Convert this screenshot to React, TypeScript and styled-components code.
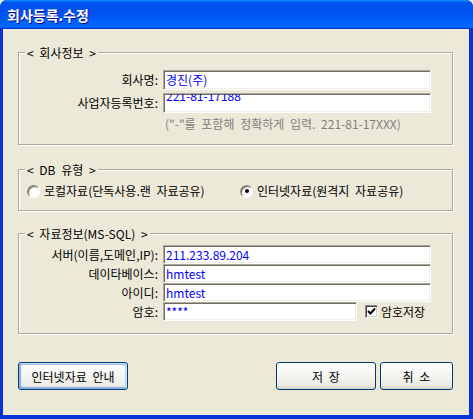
import React from "react";
import styled, { createGlobalStyle, css } from "styled-components";

const GlobalStyle = createGlobalStyle`
  html, body {
    margin: 0;
    padding: 0;
    background: #ece9d8;
    overflow: hidden;
  }
  body {
    font-family: "Noto Sans CJK KR", "Noto Sans", sans-serif;
    font-size: 12px;
    word-spacing: 3px;
    color: #000;
  }
`;

const Window = styled.div`
  width: 473px;
  height: 419px;
  display: flex;
  flex-direction: column;
  background: #0831d9;
  border-radius: 7px 7px 0 0;
  overflow: hidden;
`;

const TitleBar = styled.div`
  height: 29px;
  flex: none;
  display: flex;
  align-items: center;
  padding-left: 7px;
  background: linear-gradient(
    180deg,
    #0997ff,
    #0053ee 8%,
    #0050ee 40%,
    #06f 88%,
    #06f 93%,
    #005bff 95%,
    #003dd7 96%,
    #003dd7
  );
  color: #fff;
  font-size: 14px;
  font-weight: bold;
  text-shadow: 1px 1px #0f1089;
`;

const Client = styled.div`
  flex: 1;
  display: flex;
  flex-direction: column;
  background: #ece9d8;
  border-style: solid;
  border-width: 0 4px 4px 3px;
  border-color: #0831d9;
`;

const Group = styled.fieldset<{ $top: number }>`
  margin: ${(p) => p.$top}px 16px 0 15px;
  padding: 0;
  min-width: 0;
  border: 1px solid #aca899;
  box-shadow: inset 1px 1px 0 #fff, 1px 1px 0 #fff;
`;

const Legend = styled.legend`
  margin-left: 6px;
  padding: 0 2px;
  height: 15px;
  line-height: 15px;
  background: #ece9d8;
  white-space: pre;
`;

const Rows = styled.div<{ $pt: number; $pb: number; $gap: number }>`
  display: flex;
  flex-direction: column;
  gap: ${(p) => p.$gap}px;
  padding: ${(p) => p.$pt}px 0 ${(p) => p.$pb}px 0;
`;

const Row = styled.div<{ $h: number }>`
  display: grid;
  grid-template-columns: 139px auto;
  column-gap: 5px;
  align-items: center;
  height: ${(p) => p.$h}px;
`;

const Label = styled.div`
  text-align: right;
  white-space: nowrap;
  line-height: 14px;
`;

const FieldLine = styled.div`
  display: flex;
  align-items: center;
  height: 100%;
`;

const Field = styled.div<{ $w: number }>`
  box-sizing: border-box;
  width: ${(p) => p.$w}px;
  height: 100%;
  background: #fff;
  border: 1px solid;
  border-color: #aca899 #fff #fff #aca899;
  box-shadow: inset 1px 1px 0 #716f64, inset -1px -1px 0 #f1efe2;
  padding: 0 3px 0 2px;
  overflow: hidden;
  display: flex;
  align-items: center;
`;

const FieldText = styled.span<{ $shift?: boolean }>`
  color: #0000ff;
  line-height: 14px;
  white-space: nowrap;
  ${(p) =>
    p.$shift &&
    css`
      transform: translateY(-7px);
    `}
`;

const Hint = styled.div`
  grid-column: 2;
  padding-left: 2px;
  color: #808080;
  line-height: 14px;
  white-space: pre;
`;

const RadioRow = styled.div`
  display: flex;
  align-items: center;
  height: 16px;
  padding: 6px 0 11px 8px;
`;

const Option = styled.label<{ $w?: number }>`
  display: flex;
  align-items: center;
  gap: 4px;
  ${(p) => p.$w && `width: ${p.$w}px;`}
  white-space: nowrap;
  line-height: 14px;
`;

const RadioDot = styled.span<{ $on?: boolean }>`
  position: relative;
  box-sizing: border-box;
  width: 13px;
  height: 13px;
  flex: none;
  border-radius: 50%;
  border: 1px solid;
  border-color: #8d8b84 #fff #fff #8d8b84;
  background: radial-gradient(circle at 60% 65%, #fff 35%, #e3e1d8 90%);
  box-shadow: inset 1px 1px 0 #6b6a66;
  &::after {
    content: "";
    display: ${(p) => (p.$on ? "block" : "none")};
    position: absolute;
    left: 3.5px;
    top: 3.5px;
    width: 4px;
    height: 4px;
    border-radius: 50%;
    background: #000;
  }
`;

const CheckBox = styled.span`
  box-sizing: border-box;
  width: 13px;
  height: 13px;
  flex: none;
  display: flex;
  align-items: center;
  justify-content: center;
  background: #fff;
  border: 1px solid;
  border-color: #8d8b84 #fff #fff #8d8b84;
  box-shadow: inset 1px 1px 0 #404040, inset -1px -1px 0 #d4d0c8;
`;

const CheckLabel = styled.label`
  display: flex;
  align-items: center;
  gap: 3px;
  margin-left: 8px;
  white-space: nowrap;
  line-height: 14px;
`;

const ButtonBar = styled.div`
  display: flex;
  align-items: center;
  gap: 4px;
  margin: 28px 16px 0 15px;
`;

const Spacer = styled.div`
  flex: 1;
`;

const Button = styled.button<{ $w: number; $focused?: boolean }>`
  box-sizing: border-box;
  width: ${(p) => p.$w}px;
  height: 28px;
  padding: 0;
  font-family: inherit;
  font-size: 12px;
  word-spacing: 3px;
  color: #000;
  white-space: pre;
  border: 1px solid #003c74;
  border-radius: 3px;
  background: linear-gradient(180deg, #fff, #ecebe6 86%, #d6d0c5);
  ${(p) =>
    p.$focused &&
    css`
      box-shadow: inset -1px 1px #cee7ff, inset 1px 2px #98b8ea,
        inset -2px 2px #bcd4f6, inset 1px -1px #89ade4, inset 2px -2px #89ade4;
    `}
`;

function Check() {
  return (
    <svg width="9" height="9" viewBox="0 0 9 9">
      <path d="M1 4 L3.5 6.5 L8 1.5" fill="none" stroke="#000" strokeWidth="2" />
    </svg>
  );
}

const companyRows = [
  { label: "회사명:", value: "경진(주)" },
  { label: "사업자등록번호:", value: "221-81-17188", shift: true },
];

const dbRows = [
  { label: "서버(이름,도메인,IP):", value: "211.233.89.204" },
  { label: "데이타베이스:", value: "hmtest" },
  { label: "아이디:", value: "hmtest" },
];

export default function App() {
  return (
    <>
      <GlobalStyle />
      <Window>
        <TitleBar>회사등록.수정</TitleBar>
        <Client>
          <Group $top={16}>
            <Legend>{"< 회사정보 >"}</Legend>
            <Rows $pt={10} $pb={12} $gap={3}>
              {companyRows.map((r) => (
                <Row key={r.label} $h={20}>
                  <Label>{r.label}</Label>
                  <Field $w={268}>
                    <FieldText $shift={r.shift}>{r.value}</FieldText>
                  </Field>
                </Row>
              ))}
              <Row $h={16}>
                <Hint>{'("-"를 포함해 정확하게 입력. 221-81-17XXX)'}</Hint>
              </Row>
            </Rows>
          </Group>

          <Group $top={17}>
            <Legend>{"< DB 유형 >"}</Legend>
            <RadioRow>
              <Option $w={213}>
                <RadioDot />
                로컬자료(단독사용.랜 자료공유)
              </Option>
              <Option>
                <RadioDot $on />
                인터넷자료(원격지 자료공유)
              </Option>
            </RadioRow>
          </Group>

          <Group $top={15}>
            <Legend>{"< 자료정보(MS-SQL) >"}</Legend>
            <Rows $pt={4} $pb={12} $gap={0}>
              {dbRows.map((r) => (
                <Row key={r.label} $h={19}>
                  <Label>{r.label}</Label>
                  <Field $w={268}>
                    <FieldText>{r.value}</FieldText>
                  </Field>
                </Row>
              ))}
              <Row $h={19}>
                <Label>암호:</Label>
                <FieldLine>
                  <Field $w={194}>
                    <FieldText>****</FieldText>
                  </Field>
                  <CheckLabel>
                    <CheckBox>
                      <Check />
                    </CheckBox>
                    암호저장
                  </CheckLabel>
                </FieldLine>
              </Row>
            </Rows>
          </Group>

          <ButtonBar>
            <Button $w={110} $focused>
              인터넷자료 안내
            </Button>
            <Spacer />
            <Button $w={100}>저 장</Button>
            <Button $w={73}>취 소</Button>
          </ButtonBar>
        </Client>
      </Window>
    </>
  );
}
